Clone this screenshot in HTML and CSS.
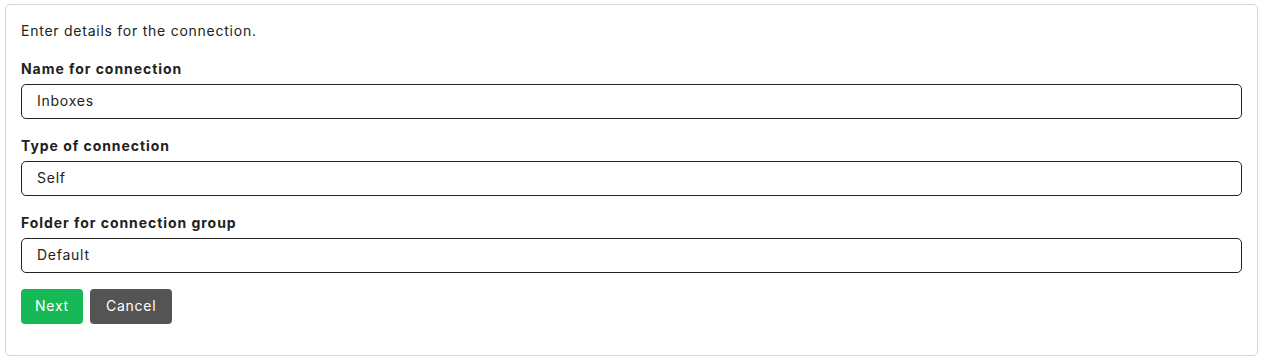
FILE: index.html
```
<!DOCTYPE html>
<html lang="en">
<head>
<meta charset="utf-8">
<title>Connection</title>
<link rel="stylesheet" href="styles.css">
</head>
<body>
<div class="page">
  <form class="card">
    <p class="intro">Enter details for the connection.</p>
    <div class="field">
      <label class="label">Name for connection</label>
      <div class="input">Inboxes</div>
    </div>
    <div class="field">
      <label class="label">Type of connection</label>
      <div class="input">Self</div>
    </div>
    <div class="field">
      <label class="label">Folder for connection group</label>
      <div class="input">Default</div>
    </div>
    <div class="actions">
      <button type="button" class="btn btn-primary">Next</button>
      <button type="button" class="btn btn-secondary">Cancel</button>
    </div>
  </form>
</div>
</body>
</html>
```
FILE: styles.css
```
html, body {
  margin: 0;
  padding: 0;
  background: #ffffff;
}
body {
  font-family: Inter, "Open Sans", sans-serif;
  color: #222222;
  letter-spacing: 0.75px;
}
.page {
  padding: 4px 6px 6px 5px;
}
.card {
  display: block;
  border: 1px solid #d6d6d6;
  border-radius: 5px;
  padding: 15px 15px 31px 15px;
  margin: 0;
}
.intro {
  margin: 0 0 17px 0;
  font-size: 14px;
  line-height: 21px;
}
.field {
  margin-bottom: 16px;
}
.label {
  display: block;
  font-size: 14px;
  font-weight: 700;
  line-height: 21px;
  letter-spacing: 0.95px;
  margin-bottom: 5px;
}
.input {
  box-sizing: border-box;
  height: 35px;
  border: 1px solid #222222;
  border-radius: 5px;
  padding: 0 15px;
  font-size: 14px;
  line-height: 32px;
  color: #222222;
}
.actions {
  display: flex;
  gap: 7px;
}
.btn {
  font-family: inherit;
  font-size: 14px;
  letter-spacing: 0.75px;
  line-height: 33px;
  height: 35px;
  padding: 0 14px 2px 14px;
  border: none;
  border-radius: 4px;
  color: #ffffff;
  cursor: pointer;
}
.btn-primary {
  background: #16b955;
}
.btn-secondary {
  background: #545454;
  padding: 0 16px 2px 16px;
}
```
